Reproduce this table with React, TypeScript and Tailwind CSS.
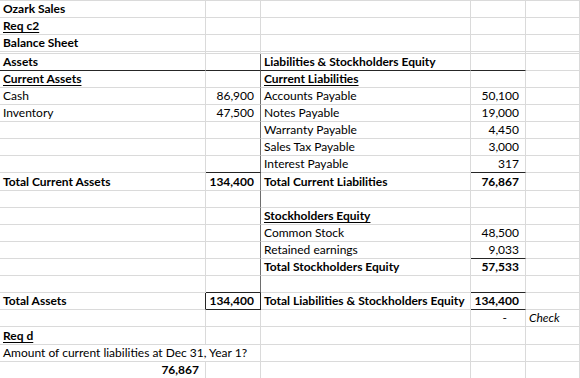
import React from "react";
import clsx from "clsx";

type CellProps = {
  t?: string;
  b?: boolean;
  u?: boolean;
  i?: boolean;
  right?: boolean;
  darkB?: boolean;
  darkR?: boolean;
  midR?: boolean;
  span?: boolean;
  wide?: boolean;
};

function Cell({ t, b, u, i, right, darkB, darkR, midR, span, wide }: CellProps) {
  return (
    <div
      className={clsx(
        "flex items-end whitespace-nowrap border-r border-b overflow-visible",
        darkB ? "border-b-[#262626]" : "border-b-[#dadada]",
        darkR ? "border-r-[#262626]" : midR ? "border-r-[#6e6e6e]" : "border-r-[#dadada]",
        right ? (wide ? "justify-end pr-[18px]" : "justify-end pr-[6px]") : "justify-start pl-[3px]",
        span && "col-span-2"
      )}
    >
      {t ? (
        <span
          className={clsx(
            "leading-[16px]",
            b && "font-bold",
            u && "underline decoration-1 underline-offset-[2px]",
            i && "italic"
          )}
        >
          {t}
        </span>
      ) : null}
    </div>
  );
}

function Row({ children, tall }: { children: React.ReactNode; tall?: boolean }) {
  return (
    <div
      className={clsx(
        "grid grid-cols-[206px_55px_210px_55px_54px]",
        tall ? "h-[18px]" : "h-[17px]"
      )}
    >
      {children}
    </div>
  );
}

export default function App() {
  return (
    <div className="w-[580px] h-[378px] overflow-hidden bg-white text-[12px] text-black font-['Lato',sans-serif] border-t border-t-[#dadada]">
      <Row>
        <Cell t="Ozark Sales" b />
        <Cell />
        <Cell />
        <Cell />
        <Cell />
      </Row>
      <Row>
        <Cell t="Req c2" b u />
        <Cell />
        <Cell />
        <Cell />
        <Cell />
      </Row>
      <Row>
        <Cell t="Balance Sheet" b />
        <Cell />
        <Cell />
        <Cell />
        <Cell />
      </Row>
      <div className="grid grid-cols-[206px_55px_210px_55px_54px] h-[2px]">
        <Cell />
        <Cell />
        <Cell />
        <Cell />
        <Cell />
      </div>
      <Row>
        <Cell t="Assets" b darkB />
        <Cell darkB midR />
        <Cell t="Liabilities & Stockholders Equity" b darkB />
        <Cell darkB />
        <Cell />
      </Row>
      <Row>
        <Cell t="Current Assets" b u />
        <Cell midR />
        <Cell t="Current Liabilities" b u />
        <Cell />
        <Cell />
      </Row>
      <Row>
        <Cell t="Cash" />
        <Cell t="86,900" right midR />
        <Cell t="Accounts Payable" />
        <Cell t="50,100" right />
        <Cell />
      </Row>
      <Row>
        <Cell t="Inventory" />
        <Cell t="47,500" right midR />
        <Cell t="Notes Payable" />
        <Cell t="19,000" right />
        <Cell />
      </Row>
      <Row>
        <Cell />
        <Cell midR />
        <Cell t="Warranty Payable" />
        <Cell t="4,450" right />
        <Cell />
      </Row>
      <Row>
        <Cell />
        <Cell midR />
        <Cell t="Sales Tax Payable" />
        <Cell t="3,000" right />
        <Cell />
      </Row>
      <Row>
        <Cell />
        <Cell midR darkB />
        <Cell t="Interest Payable" />
        <Cell t="317" right darkB />
        <Cell />
      </Row>
      <Row tall>
        <Cell t="Total Current Assets" b />
        <Cell t="134,400" b right midR />
        <Cell t="Total Current Liabilities" b />
        <Cell t="76,867" b right />
        <Cell />
      </Row>
      <Row>
        <Cell />
        <Cell midR />
        <Cell />
        <Cell />
        <Cell />
      </Row>
      <Row>
        <Cell />
        <Cell midR />
        <Cell t="Stockholders Equity" b u />
        <Cell />
        <Cell />
      </Row>
      <Row>
        <Cell />
        <Cell midR />
        <Cell t="Common Stock" />
        <Cell t="48,500" right />
        <Cell />
      </Row>
      <Row>
        <Cell />
        <Cell midR />
        <Cell t="Retained earnings" />
        <Cell t="9,033" right darkB />
        <Cell />
      </Row>
      <Row>
        <Cell />
        <Cell midR />
        <Cell t="Total Stockholders Equity" b />
        <Cell t="57,533" b right />
        <Cell />
      </Row>
      <Row>
        <Cell />
        <Cell midR darkB />
        <Cell />
        <Cell darkB />
        <Cell />
      </Row>
      <Row>
        <Cell t="Total Assets" b darkR />
        <Cell t="134,400" b right darkR darkB />
        <Cell t="Total Liabilities & Stockholders Equity" b />
        <Cell t="134,400" b right darkB />
        <Cell />
      </Row>
      <Row>
        <Cell />
        <Cell />
        <Cell />
        <Cell t="-" right wide />
        <Cell t="Check" i />
      </Row>
      <Row tall>
        <Cell t="Req d" b u />
        <Cell />
        <Cell />
        <Cell />
        <Cell />
      </Row>
      <Row>
        <Cell t="Amount of current liabilities at Dec 31, Year 1?" span />
        <Cell />
        <Cell />
        <Cell />
      </Row>
      <Row>
        <Cell t="76,867" b right />
        <Cell />
        <Cell />
        <Cell />
        <Cell />
      </Row>
    </div>
  );
}
